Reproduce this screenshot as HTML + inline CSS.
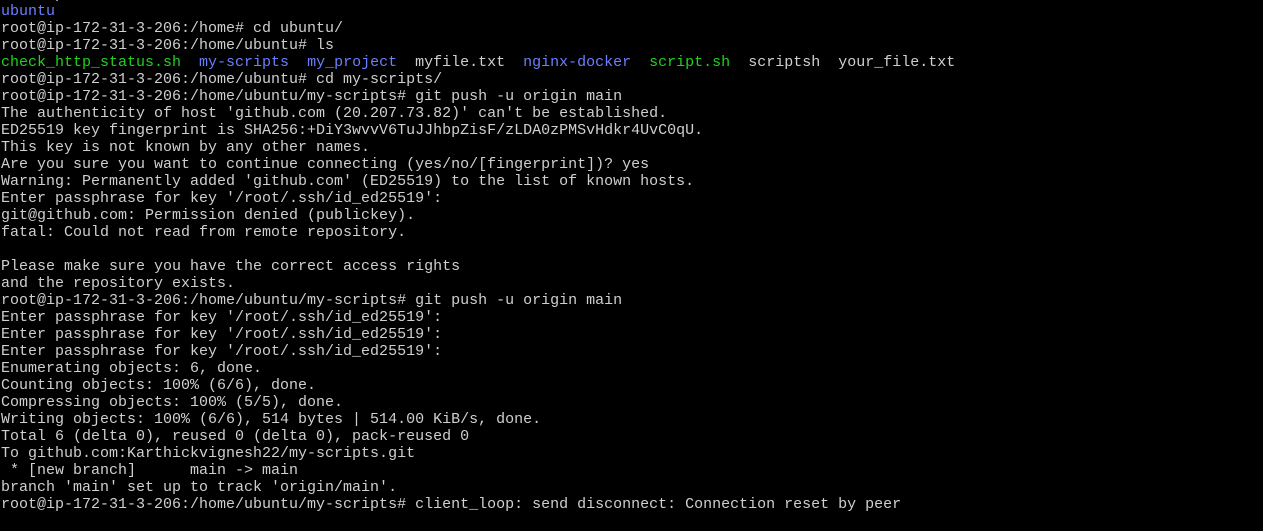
<!DOCTYPE html>
<html><head><meta charset="utf-8"><style>
html,body{margin:0;padding:0;background:#000;width:1263px;height:531px;overflow:hidden}
pre{position:absolute;left:1px;top:-14px;margin:0;font-family:"Liberation Mono","DejaVu Sans Mono",monospace;font-size:15px;line-height:17px;color:#cfcfcf;white-space:pre}
.b{color:#6b7fff}.g{color:#1fd21f}
</style></head><body><pre>root@ip-172-31-3-206:/home# ls
<span class="b">ubuntu</span>
root@ip-172-31-3-206:/home# cd ubuntu/
root@ip-172-31-3-206:/home/ubuntu# ls
<span class="g">check_http_status.sh</span>  <span class="b">my-scripts</span>  <span class="b">my_project</span>  myfile.txt  <span class="b">nginx-docker</span>  <span class="g">script.sh</span>  scriptsh  your_file.txt
root@ip-172-31-3-206:/home/ubuntu# cd my-scripts/
root@ip-172-31-3-206:/home/ubuntu/my-scripts# git push -u origin main
The authenticity of host 'github.com (20.207.73.82)' can't be established.
ED25519 key fingerprint is SHA256:+DiY3wvvV6TuJJhbpZisF/zLDA0zPMSvHdkr4UvC0qU.
This key is not known by any other names.
Are you sure you want to continue connecting (yes/no/[fingerprint])? yes
Warning: Permanently added 'github.com' (ED25519) to the list of known hosts.
Enter passphrase for key '/root/.ssh/id_ed25519':
git@github.com: Permission denied (publickey).
fatal: Could not read from remote repository.

Please make sure you have the correct access rights
and the repository exists.
root@ip-172-31-3-206:/home/ubuntu/my-scripts# git push -u origin main
Enter passphrase for key '/root/.ssh/id_ed25519':
Enter passphrase for key '/root/.ssh/id_ed25519':
Enter passphrase for key '/root/.ssh/id_ed25519':
Enumerating objects: 6, done.
Counting objects: 100% (6/6), done.
Compressing objects: 100% (5/5), done.
Writing objects: 100% (6/6), 514 bytes | 514.00 KiB/s, done.
Total 6 (delta 0), reused 0 (delta 0), pack-reused 0
To github.com:Karthickvignesh22/my-scripts.git
 * [new branch]      main -> main
branch 'main' set up to track 'origin/main'.
root@ip-172-31-3-206:/home/ubuntu/my-scripts# client_loop: send disconnect: Connection reset by peer
</pre></body></html>
